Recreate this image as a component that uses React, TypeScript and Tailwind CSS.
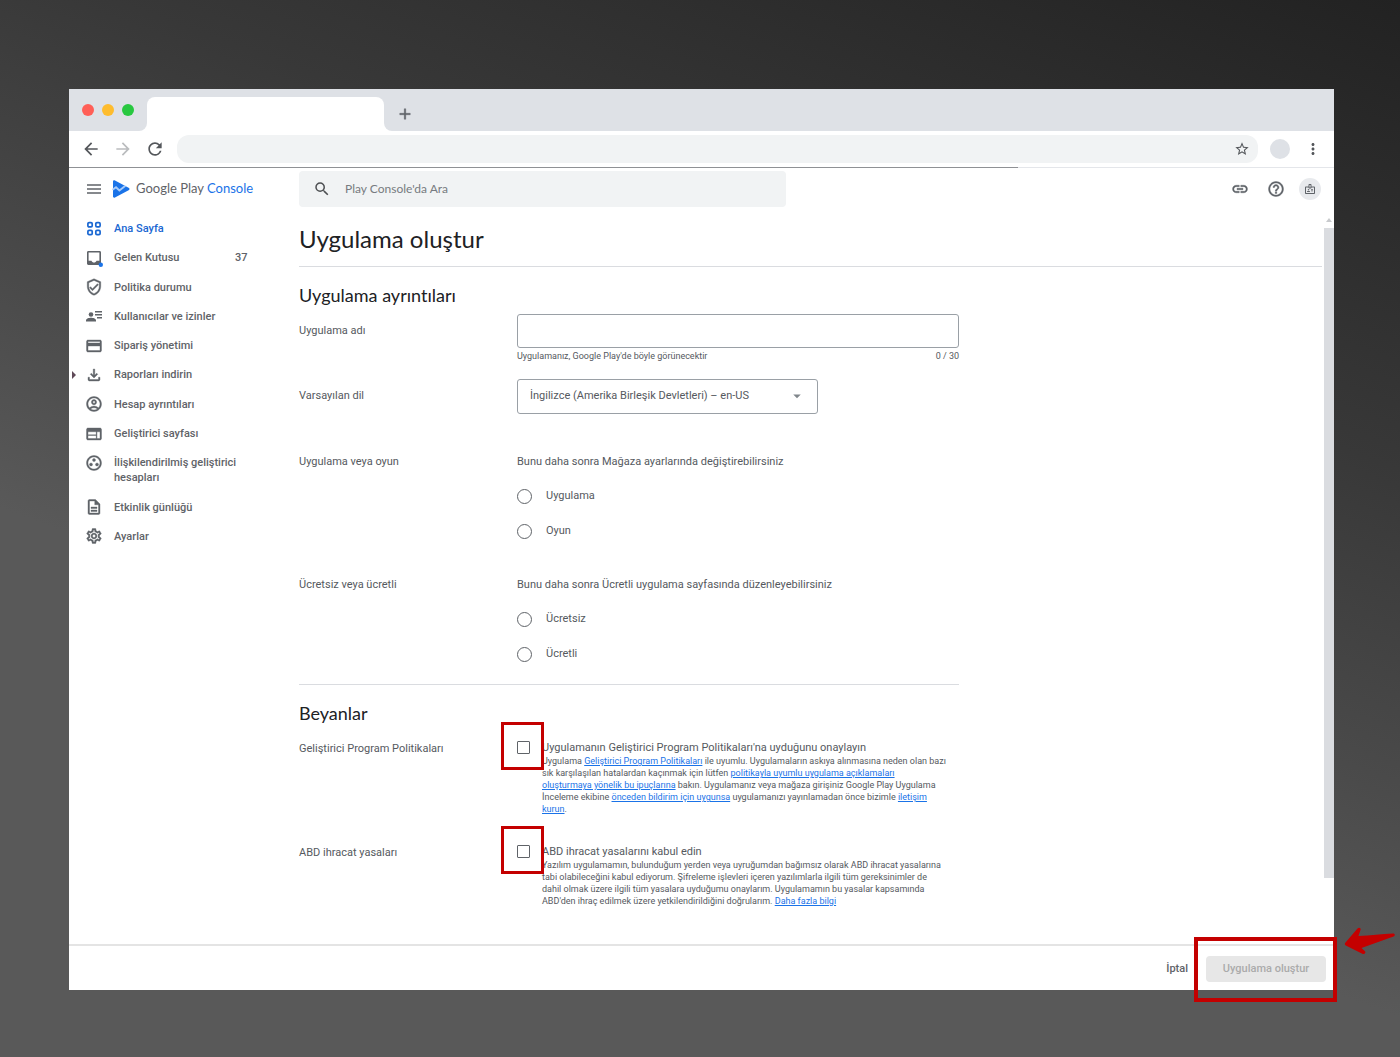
import React, { useState } from 'react';
import {
  MdAdd,
  MdArrowBack,
  MdArrowDropDown,
  MdArrowForward,
  MdCreditCard,
  MdHelpOutline,
  MdLink,
  MdMoreVert,
  MdOutlineAccountCircle,
  MdOutlineBadge,
  MdOutlineDescription,
  MdOutlineFileDownload,
  MdOutlineGroupWork,
  MdOutlineSettings,
  MdOutlineVerifiedUser,
  MdRefresh,
  MdSearch,
  MdStarBorder,
  MdWeb,
} from 'react-icons/md';

// slightly heavier outline, leaving the icons' invisible bounding shape alone
const BOLD = 'stroke-[0.5] [&_[fill=none]]:stroke-none';

const HomeIcon = () => (
  <svg viewBox="0 0 16 16" className="w-4 h-4" fill="none" stroke="currentColor" strokeWidth="1.7">
    <rect x="1.9" y="1.6" width="4.3" height="4.3" rx="1.2" />
    <rect x="9.8" y="1.6" width="4.3" height="4.3" rx="1.2" />
    <rect x="1.9" y="9.3" width="4.3" height="4.3" rx="1.2" />
    <rect x="9.8" y="9.3" width="4.3" height="4.3" rx="1.2" />
  </svg>
);

const InboxIcon = () => (
  <svg viewBox="0 0 16 16" className="w-4 h-4 overflow-visible">
    <path
      fill="currentColor"
      fillRule="evenodd"
      d="M2.4 1h11.2c.8 0 1.4.6 1.4 1.4v11.2c0 .8-.6 1.4-1.4 1.4H2.4c-.8 0-1.4-.6-1.4-1.4V2.4C1 1.6 1.6 1 2.4 1zm.2 1.6v8.2h2.9c.4 1.1 1.3 1.8 2.5 1.8s2.1-.7 2.5-1.8h2.9V2.6z"
    />
    <circle cx="14.8" cy="14.8" r="2.2" fill="#1a73e8" />
  </svg>
);

const UsersIcon = () => (
  <svg viewBox="0 0 16 16" className="w-4 h-4" fill="currentColor">
    <circle cx="5" cy="6.5" r="2.3" />
    <path d="M0 13.5v-1.3c0-1.7 3.2-2.5 5-2.5s5 .8 5 2.5v1.3z" />
    <path d="M9 3h7v1.5H9zM9 6h7v1.5H9zM11 9h5v1.5h-5z" />
  </svg>
);

const PlayLogo = () => (
  <svg viewBox="0 0 18 18" className="w-[18px] h-[18px]">
    <path fill="#1a73e8" d="M1 1.5C1 .5 2 0 3 .5l13.6 7.2c1.2.6 1.2 2 0 2.6L3 17.5c-1 .5-2 0-2-1z" />
    <path fill="none" stroke="#a8ccfb" strokeWidth="1.9" d="M.5 9.8 4 7.2l3.4 3.2 6-4.6" />
  </svg>
);

const NAV_ITEMS = [
  { label: 'Ana Sayfa', icon: <HomeIcon />, active: true },
  { label: 'Gelen Kutusu', icon: <InboxIcon />, count: 37 },
  { label: 'Politika durumu', icon: <MdOutlineVerifiedUser className={BOLD} /> },
  { label: 'Kullanıcılar ve izinler', icon: <UsersIcon /> },
  { label: 'Sipariş yönetimi', icon: <MdCreditCard className={BOLD} /> },
  { label: 'Raporları indirin', icon: <MdOutlineFileDownload className={BOLD} />, expandable: true },
  { label: 'Hesap ayrıntıları', icon: <MdOutlineAccountCircle className={BOLD} /> },
  { label: 'Geliştirici sayfası', icon: <MdWeb className={BOLD} /> },
  { label: 'İlişkilendirilmiş geliştirici hesapları', icon: <MdOutlineGroupWork className={BOLD} /> },
  { label: 'Etkinlik günlüğü', icon: <MdOutlineDescription className={BOLD} /> },
  { label: 'Ayarlar', icon: <MdOutlineSettings className={BOLD} /> },
];

const BrowserChrome = () => (
  <div>
    <div className="flex h-[42px]">
      <div className="flex items-center gap-2 pl-[13px] w-[78px] rounded-br-lg bg-[#dee1e6]">
        <span className="w-3 h-3 rounded-full bg-[#ff5f57]" />
        <span className="w-3 h-3 rounded-full bg-[#febc2e]" />
        <span className="w-3 h-3 rounded-full bg-[#28c840]" />
      </div>
      <div className="w-[237px] h-5 pt-2 bg-[#dee1e6]">
        <div className="h-[34px] rounded-t-lg bg-white" />
      </div>
      <div className="flex-1 flex items-center pl-3 pt-2 rounded-bl-lg bg-[#dee1e6]">
        <button aria-label="Yeni sekme" className="text-[#5f6368]">
          <MdAdd className={`w-[18px] h-[18px] ${BOLD}`} />
        </button>
      </div>
    </div>
    <div className="flex items-center h-9 px-3 bg-white text-[#54575b]">
      <button aria-label="Geri" className="w-8"><MdArrowBack className="w-5 h-5" /></button>
      <button aria-label="İleri" className="w-8 text-[#babcbe]"><MdArrowForward className="w-5 h-5" /></button>
      <button aria-label="Yenile" className="w-8"><MdRefresh className="w-5 h-5" /></button>
      <div className="flex-1 flex items-center justify-end h-7 pr-2 rounded-xl bg-[#f1f3f4]">
        <button aria-label="Yer işareti ekle"><MdStarBorder className="w-4 h-4" /></button>
      </div>
      <span className="w-5 h-5 ml-3 rounded-full bg-[#dee1e6]" />
      <button aria-label="Menü" className="ml-3.5"><MdMoreVert className="w-[18px] h-[18px]" /></button>
    </div>
    <div className="flex h-px">
      <div className="w-3/4 bg-[#8f9195]" />
      <div className="flex-1 bg-[#e4e6ea]" />
    </div>
  </div>
);

const AppHeader = () => (
  <header className="flex items-center h-[42px] pl-[17px] pr-[13px] text-[#5f6368]">
    <button aria-label="Gezinme menüsü">
      <svg viewBox="0 0 16 12" className="w-4 h-3" stroke="currentColor" strokeWidth="1.5">
        <path d="M1 2h14M1 6h14M1 10h14" />
      </svg>
    </button>
    <a href="#" className="flex items-center gap-1.5 ml-2.5 w-[187px] text-[13px] font-[Lato,sans-serif]">
      <PlayLogo />
      <span className="whitespace-nowrap">Google Play <span className="text-[#1a73e8]">Console</span></span>
    </a>
    <label className="flex items-center w-[487px] h-9 px-3.5 gap-3.5 rounded bg-[#f1f3f4]">
      <MdSearch className="w-[18px] h-[18px] text-[#4d4f52]" />
      <input
        type="text"
        aria-label="Ara"
        placeholder="Play Console'da Ara"
        className="flex-1 bg-transparent text-xs outline-none placeholder:text-[#777b80] font-[Lato,sans-serif]"
      />
    </label>
    <div className="flex items-center ml-auto gap-3.5">
      <div className="flex items-center gap-[18px]">
        <button aria-label="Bağlantı"><MdLink className={`w-[18px] h-[18px] ${BOLD}`} /></button>
        <button aria-label="Yardım"><MdHelpOutline className={`w-[18px] h-[18px] ${BOLD}`} /></button>
      </div>
      <button aria-label="Hesap" className="flex items-center justify-center w-[22px] h-[22px] rounded-full bg-[#e8eaed]">
        <MdOutlineBadge className="w-3 h-3" />
      </button>
    </div>
  </header>
);

const Sidebar = () => (
  <nav className="w-[230px] shrink-0 pt-[11px]">
    <ul className="flex flex-col justify-between h-[323px]">
      {NAV_ITEMS.map((item) => (
        <li key={item.label} className="flex items-start">
          <span className="flex items-center w-4 h-[15px] pl-[3px]">
            {item.expandable && (
              <svg viewBox="0 0 4 8" className="w-1 h-2 text-[#5f4a58]" fill="currentColor"><path d="M0 0l4 4-4 4z" /></svg>
            )}
          </span>
          <a
            href="#"
            className={`flex text-[11px] leading-[15px] font-medium font-[Roboto,sans-serif] ${item.active ? 'text-[#1967d2]' : 'text-[#5f6368]'}`}
          >
            <span className="flex items-center justify-center w-[18px] h-[15px] mr-[11px] text-lg">{item.icon}</span>
            <span className="min-w-[121px] max-w-[150px]">{item.label}</span>
            {item.count && <span>{item.count}</span>}
          </a>
        </li>
      ))}
    </ul>
  </nav>
);

interface RowProps {
  label: string;
  htmlFor?: string;
  className: string;
  children: React.ReactNode;
}

const FormRow: React.FC<RowProps> = ({ label, htmlFor, className, children }) => (
  <div className={`flex ${className}`}>
    <label htmlFor={htmlFor} className="w-[218px] shrink-0 leading-[34px]">{label}</label>
    <div className="flex-1 min-w-0">{children}</div>
  </div>
);

interface RadioProps {
  name: string;
  hint: string;
  options: string[];
}

const RadioGroup: React.FC<RadioProps> = ({ name, hint, options }) => (
  <div role="radiogroup" aria-label={hint}>
    <p className="leading-[34px]">{hint}</p>
    {options.map((option) => (
      <label key={option} className="flex items-center gap-3.5 h-[35px]">
        <input type="radio" name={name} className="appearance-none w-[15px] h-[15px] rounded-full border border-[#5f6368] checked:border-4" />
        {option}
      </label>
    ))}
  </div>
);

interface DeclarationProps {
  id: string;
  title: string;
  children: React.ReactNode;
}

const Declaration: React.FC<DeclarationProps> = ({ id, title, children }) => (
  <div className="flex pt-[9px]">
    <div className="relative w-[25px] shrink-0">
      <input id={id} type="checkbox" className="block appearance-none w-[13px] h-[13px] rounded-[1px] border border-[#5f6368] checked:bg-[#1a73e8]" />
      {/* highlight frame */}
      <span className="absolute -left-4 -top-[19px] w-[43px] h-12 border-3 border-[#c40000] pointer-events-none" />
    </div>
    <div>
      <label htmlFor={id} className="block leading-[14px]">{title}</label>
      <p className="text-[9px] leading-3">{children}</p>
    </div>
  </div>
);

const TextLink = ({ children }: { children: React.ReactNode }) => (
  <a href="#" className="text-[#1a73e8] underline">{children}</a>
);

const CreateAppForm = () => {
  const [name, setName] = useState('');

  return (
    <main className="flex-1 min-w-0 pb-[37px] text-[11px] text-[#55595e]">
      <h1 className="h-[57px] pt-[13px] mr-0.5 border-b border-[#dadce0] text-2xl text-[#202124] font-[Lato,sans-serif]">Uygulama oluştur</h1>
      <form id="create-app" className="w-[660px] max-w-full">
        <h2 className="pt-[15px] pb-0.5 text-lg leading-[26px] text-[#202124] font-[Lato,sans-serif] [font-variant-ligatures:none]">Uygulama ayrıntıları</h2>
        <FormRow label="Uygulama adı" htmlFor="app-name" className="h-[65px] pt-1">
          <input
            id="app-name"
            type="text"
            maxLength={30}
            value={name}
            onChange={(e) => setName(e.target.value)}
            className="block w-full h-[34px] px-3 rounded-[3px] border border-[#9aa0a6] outline-none"
          />
          <div className="flex justify-between pt-0.5 text-[9px] leading-3">
            <span>Uygulamanız, Google Play'de böyle görünecektir</span>
            <span>{name.length} / 30</span>
          </div>
        </FormRow>
        <FormRow label="Varsayılan dil" htmlFor="language" className="h-[70px] pt-1">
          <div className="relative w-[301px]">
            <select id="language" className="appearance-none w-full h-[35px] px-3 rounded-[3px] border border-[#9aa0a6] bg-white">
              <option>İngilizce (Amerika Birleşik Devletleri) – en-US</option>
            </select>
            <MdArrowDropDown className="absolute right-3 top-2 w-[18px] h-[18px] text-[#80868b] pointer-events-none" />
          </div>
        </FormRow>
        <FormRow label="Uygulama veya oyun" className="h-[123px]">
          <RadioGroup name="kind" hint="Bunu daha sonra Mağaza ayarlarında değiştirebilirsiniz" options={['Uygulama', 'Oyun']} />
        </FormRow>
        <FormRow label="Ücretsiz veya ücretli" className="h-[116px]">
          <RadioGroup name="price" hint="Bunu daha sonra Ücretli uygulama sayfasında düzenleyebilirsiniz" options={['Ücretsiz', 'Ücretli']} />
        </FormRow>
        <h2 className="pt-[15px] pb-0.5 border-t border-[#dadce0] text-lg leading-[26px] text-[#202124] font-[Lato,sans-serif]">Beyanlar</h2>
        <FormRow label="Geliştirici Program Politikaları" className="pt-1 h-[108px]">
          <Declaration id="policies" title="Uygulamanın Geliştirici Program Politikaları'na uyduğunu onaylayın">
            Uygulama <TextLink>Geliştirici Program Politikaları</TextLink> ile uyumlu. Uygulamaların askıya alınmasına neden olan bazı
            <br />sık karşılaşılan hatalardan kaçınmak için lütfen <TextLink>politikayla uyumlu uygulama açıklamaları
            <br />oluşturmaya yönelik bu ipuçlarına</TextLink> bakın. Uygulamanız veya mağaza girişiniz Google Play Uygulama
            <br />İnceleme ekibine <TextLink>önceden bildirim için uygunsa</TextLink> uygulamanızı yayınlamadan önce bizimle <TextLink>iletişim
            <br />kurun</TextLink>.
          </Declaration>
        </FormRow>
        <FormRow label="ABD ihracat yasaları" className="">
          <Declaration id="export-laws" title="ABD ihracat yasalarını kabul edin">
            Yazılım uygulamamın, bulunduğum yerden veya uyruğumdan bağımsız olarak ABD ihracat yasalarına
            <br />tabi olabileceğini kabul ediyorum. Şifreleme işlevleri içeren yazılımlarla ilgili tüm gereksinimler de
            <br />dahil olmak üzere ilgili tüm yasalara uyduğumu onaylarım. Uygulamamın bu yasalar kapsamında
            <br />ABD'den ihraç edilmek üzere yetkilendirildiğini doğrularım. <TextLink>Daha fazla bilgi</TextLink>
          </Declaration>
        </FormRow>
      </form>
    </main>
  );
};

const Scrollbar = () => (
  <div className="flex flex-col items-center w-2.5 shrink-0 pt-2 pb-[66px]">
    <svg viewBox="0 0 6 4" className="w-1.5 h-1 mb-1.5 text-[#c8cacd]" fill="currentColor"><path d="M0 4l3-4 3 4z" /></svg>
    <div className="flex-1 w-full bg-[#dadce0]" />
  </div>
);

const ActionBar = () => (
  <footer className="flex items-center justify-end h-[46px] pt-0.5 pr-2 gap-[18px] border-t-2 border-[#e4e4e4] text-[11px] font-medium">
    <button className="text-[#5f6368]">İptal</button>
    <div className="relative">
      <button type="submit" form="create-app" disabled className="block w-[120px] h-[26px] rounded-sm bg-[#e7e7e7] text-[#ababab]">
        Uygulama oluştur
      </button>
      {/* highlight frame and the arrow that points to it */}
      <span className="absolute -left-3 -top-[19px] w-[143px] h-[65px] border-4 border-[#c40000] pointer-events-none" />
      <svg viewBox="0 0 52 30" className="absolute left-[138px] -top-[30px] w-[52px] h-[30px] pointer-events-none" fill="#c40000">
        <path d="M1.5 16.5 13.5 2.5c1-1.4 3.7-.8 3.1 1.2l-2.1 6.3c12-.6 23-1.8 34.5-2.500 2.200-.1 2.400 2.400.5 3.100L17.500 22l3.500 3.300c1.300 1.500-.5 3.400-2.200 2.600L1.800 19.500c-1.300-.9-1.300-1.900-.3-3z" />
      </svg>
    </div>
  </footer>
);

export default function App() {
  return (
    <div className="min-h-screen pt-[89px] pb-16 pl-[69px] pr-[66px] bg-[linear-gradient(200deg,#222222_0%,#383838_30%,#4a4a4a_50%,#595959_65%)] font-[Roboto,sans-serif]">
      <div className="bg-white">
        <BrowserChrome />
        <AppHeader />
        <div className="flex">
          <Sidebar />
          <CreateAppForm />
          <Scrollbar />
        </div>
        <ActionBar />
      </div>
    </div>
  );
}
